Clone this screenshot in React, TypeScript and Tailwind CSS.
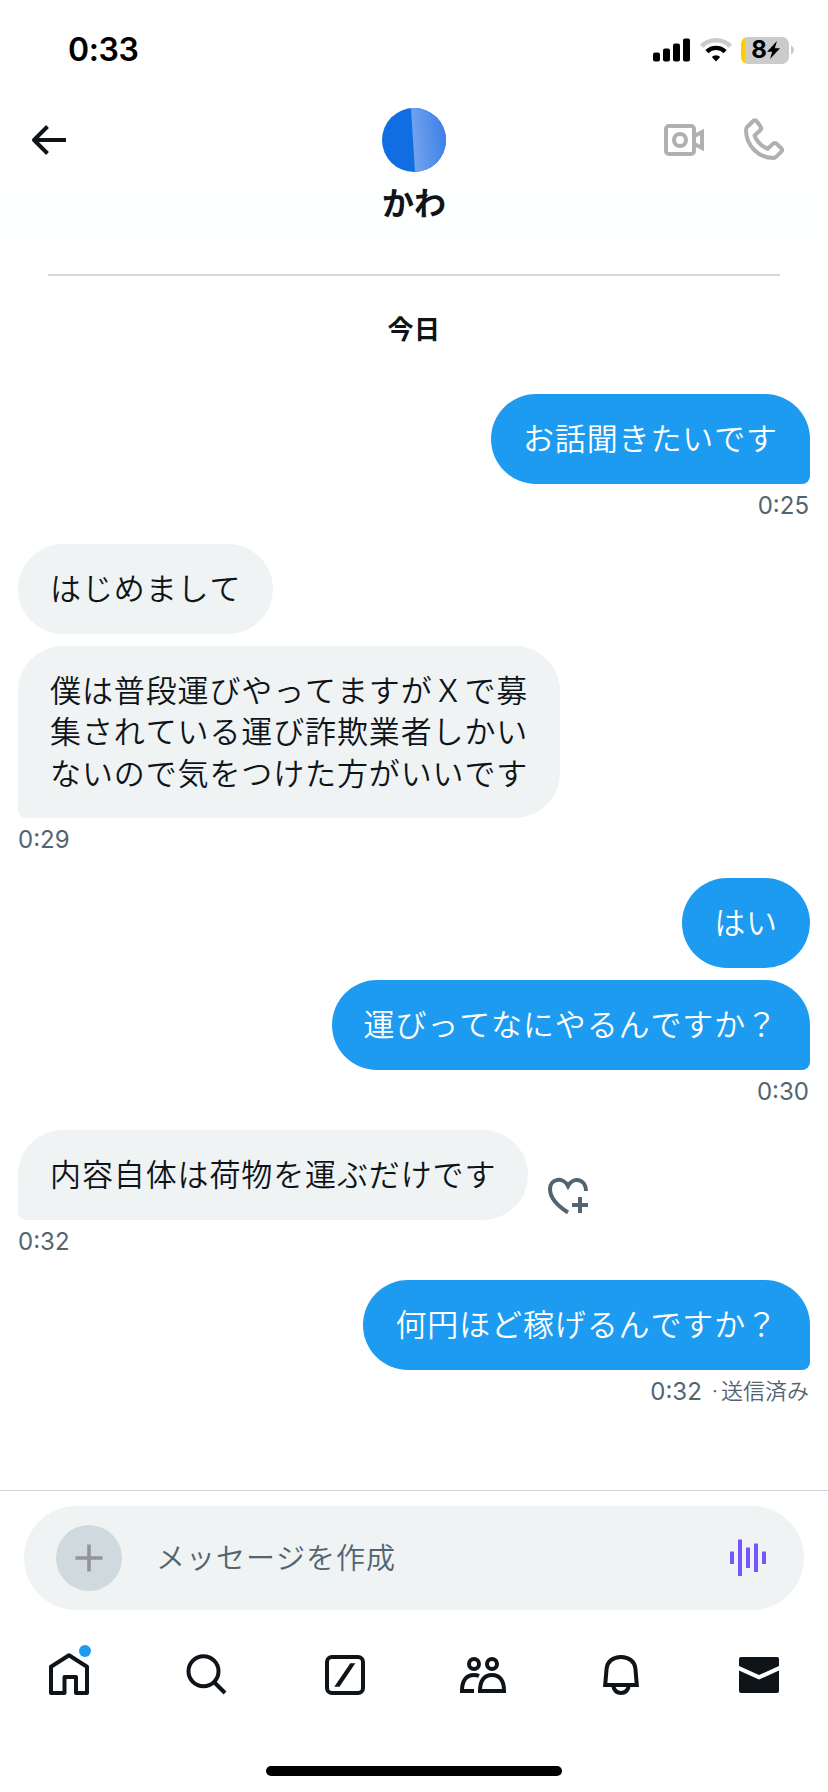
import clsx from 'clsx';

interface Message {
  lines: string[];
  tail?: boolean;
  likeable?: boolean;
}

interface MessageGroup {
  id: number;
  mine: boolean;
  time: string;
  status?: string;
  messages: Message[];
}

const groups: MessageGroup[] = [
  { id: 1, mine: true, time: '0:25', messages: [{ lines: ['お話聞きたいです'], tail: true }] },
  {
    id: 2,
    mine: false,
    time: '0:29',
    messages: [
      { lines: ['はじめまして'] },
      {
        lines: [
          '僕は普段運びやってますがＸで募',
          '集されている運び詐欺業者しかい',
          'ないので気をつけた方がいいです',
        ],
        tail: true,
      },
    ],
  },
  {
    id: 3,
    mine: true,
    time: '0:30',
    messages: [{ lines: ['はい'] }, { lines: ['運びってなにやるんですか？'], tail: true }],
  },
  {
    id: 4,
    mine: false,
    time: '0:32',
    messages: [{ lines: ['内容自体は荷物を運ぶだけです'], tail: true, likeable: true }],
  },
  {
    id: 5,
    mine: true,
    time: '0:32',
    status: '送信済み',
    messages: [{ lines: ['何円ほど稼げるんですか？'], tail: true }],
  },
];

function StatusBar() {
  return (
    <div className="flex h-[100px] items-center justify-between pl-[68px] pr-[33px]">
      <span className="text-[32px] font-semibold leading-none tracking-[-0.4px] text-black">0:33</span>
      <div className="flex items-center">
        <svg width="37" height="24" viewBox="0 0 37 24" className="mr-[10px]">
          <rect x="0" y="14.5" width="7" height="9" rx="2" />
          <rect x="10" y="10.5" width="7" height="13" rx="2" />
          <rect x="20" y="5.5" width="7" height="18" rx="2" />
          <rect x="30" y="0.5" width="7" height="23" rx="2" />
        </svg>
        <svg width="32" height="24" viewBox="0 0 32 24" className="mr-[9px]" fill="none">
          <path d="M1.6 8.2a20.5 20.5 0 0 1 28.8 0" stroke="#cbcbcb" strokeWidth="4.4" />
          <path d="M6.9 13.6a13 13 0 0 1 18.2 0" stroke="#000" strokeWidth="4.4" />
          <path d="M11.8 19a6 6 0 0 1 8.4 0L16 23.5z" fill="#000" />
        </svg>
        <div className="flex h-[27px] w-[48px] items-center justify-center overflow-hidden rounded-[7px] bg-[linear-gradient(to_right,#ffcc00_4px,#cbcbcb_4px)] pl-px">
          <span className="text-[24px] font-bold leading-none tracking-[-1px] text-black">8</span>
          <svg width="13" height="18" viewBox="0 0 13 18" className="ml-px shrink-0">
            <path d="M10 0L0 10.800h5.200L3 18 13 7.200H7.800z" />
          </svg>
        </div>
        <svg width="4" height="10" viewBox="0 0 4 10" className="ml-[2px]">
          <path d="M0 0.5c4 1.8 4 7.2 0 9z" fill="#cbcbcb" />
        </svg>
      </div>
    </div>
  );
}

function Header() {
  return (
    <header className="grid h-[141px] grid-cols-3 items-start bg-gradient-to-b from-white to-[#fdfefe] pt-[8px]">
      <svg width="48" height="64" viewBox="0 0 48 64" className="ml-[24px]" fill="none" stroke="#0f1419" strokeWidth="4">
        <path d="M42 32H10M23.5 18.5L10 32l13.5 13.5" strokeLinejoin="round" />
      </svg>
      <div className="flex flex-col items-center">
        <svg width="64" height="64" viewBox="0 0 64 64">
          <defs>
            <linearGradient id="fold" x1="0" x2="1" y1="0.4" y2="0.2">
              <stop offset="0" stopColor="#74a3ee" />
              <stop offset="1" stopColor="#3a7fe6" />
            </linearGradient>
            <clipPath id="round">
              <circle cx="32" cy="32" r="32" />
            </clipPath>
          </defs>
          <g clipPath="url(#round)">
            <rect width="64" height="64" fill="#116ee2" />
            <path d="M29 0h35v64H33z" fill="url(#fold)" />
          </g>
        </svg>
        <h1 className="mt-[12px] text-[32px] font-bold leading-[40px] text-[#0f1419]">かわ</h1>
      </div>
      <div className="flex justify-end gap-[40px] pr-[44px]">
        <svg width="40" height="64" viewBox="0 0 40 64" fill="none" stroke="#afb0b1" strokeWidth="4">
          <rect x="2" y="18" width="28" height="28" rx="3" />
          <circle cx="16" cy="32" r="6" />
          <path d="M30 28.2L38 24v16l-8-4.2" />
        </svg>
        <svg width="40" height="64" viewBox="0 0 40 64" fill="none" stroke="#afb0b1" strokeWidth="4" strokeLinejoin="round">
          <path d="M9.5 12.7L3.3 18.8Q2 20 2 22C2 38 15 50 29 50q2 0 3.3-1.300l5-5q1.500-1.700 0-3.400l-4.500-4.500q-2-1.500-4 0l-5 5C17 38 13 34 10.500 27.500l6-5.500q1.500-1.800 0-3.500l-4-5.500q-1.500-1.400-3-.3z" />
        </svg>
      </div>
    </header>
  );
}

function Bubble({ message, mine }: { message: Message; mine: boolean }) {
  return (
    <div className={clsx('flex items-end', mine ? 'justify-end' : 'justify-start')}>
      <div
        className={clsx(
          'min-h-[90px] rounded-[45px] px-[32px] py-[24px] text-[31px] font-[350] leading-[41.4px] tracking-[0.88px] [font-kerning:none]',
          mine ? 'bg-[#1d9bf0] text-white' : 'bg-[#eff3f4] text-[#0f1419]',
          message.tail && (mine ? 'rounded-br-[8px]' : 'rounded-bl-[8px]')
        )}
      >
        {message.lines.map((line) => (
          <p key={line} className="whitespace-nowrap">
            {line}
          </p>
        ))}
      </div>
      {message.likeable && (
        <svg width="44" height="44" viewBox="0 0 44 44" className="ml-[20px]" fill="none" stroke="#536471" strokeWidth="4">
          <path d="M20 36.5C9 29.5 2 21 2 13 2 2.500 15 0.500 20 10 25 0.500 38 2.500 38 15" />
          <path d="M24 29h16M32 21v16" />
        </svg>
      )}
    </div>
  );
}

function Composer() {
  return (
    <div className="border-t border-[#c7d3d9] px-[24px] pt-[15px]">
      <div className="flex h-[104px] items-center rounded-full bg-[#eff3f4] pl-[32px] pr-[38px]">
        <div className="flex h-[66px] w-[66px] items-center justify-center rounded-full bg-[#cfd9de]">
          <svg width="28" height="28" viewBox="0 0 28 28" stroke="#969398" strokeWidth="3.6">
            <path d="M14 0.5v27M0.5 14h27" />
          </svg>
        </div>
        <span className="ml-[34px] flex-1 text-[29px] font-[350] leading-none tracking-[1px] text-[#536471] [font-kerning:none]">
          メッセージを作成
        </span>
        <svg width="36" height="38" viewBox="0 0 36 38" fill="#7856ff">
          <rect x="0" y="12.5" width="4" height="12.5" />
          <rect x="8" y="0.5" width="4" height="36.5" />
          <rect x="16" y="8.5" width="4" height="20.5" />
          <rect x="24" y="4.5" width="4" height="28.5" />
          <rect x="32" y="12.5" width="4" height="12.5" />
        </svg>
      </div>
    </div>
  );
}

function TabBar() {
  return (
    <nav className="grid h-[100px] grid-cols-6 justify-items-center pt-[30px]">
      <div className="relative">
        <svg width="48" height="60" viewBox="0 0 48 60" fill="none" stroke="#0f1419" strokeWidth="4" strokeLinejoin="round">
          <path d="M24 15.3L42 26.8V53H31V37H19.500V53H6V26.800z" />
        </svg>
        <span className="absolute right-[2px] top-[5px] h-[12px] w-[12px] rounded-full bg-[#1d9bf0]" />
      </div>
      <svg width="48" height="60" viewBox="0 0 48 60" fill="none" stroke="#0f1419" strokeWidth="4">
        <circle cx="20.5" cy="31.3" r="15" />
        <path d="M31 42l11 11" />
      </svg>
      <svg width="48" height="60" viewBox="0 0 48 60" fill="none" stroke="#0f1419" strokeWidth="4">
        <rect x="6" y="17" width="36" height="36" rx="5" />
        <path d="M13.3 46.7h5.2L34.300 23.300h-5z" fill="#0f1419" stroke="none" />
      </svg>
      <svg width="48" height="60" viewBox="0 0 48 60" fill="none" stroke="#0f1419" strokeWidth="4">
        <circle cx="15" cy="24" r="5" />
        <circle cx="33" cy="24" r="5" />
        <path d="M21 51c0-10 4-16 12-16s12 6 12 16z" />
        <path d="M20 36c-1.5-.7-3-1-5-1-8 0-12 6-12 16h12" />
      </svg>
      <svg width="48" height="60" viewBox="0 0 48 60" fill="none" stroke="#0f1419" strokeWidth="4">
        <path d="M8.2 45l1.4-16.5C10.300 21.500 16 17 24 17s13.700 4.500 14.400 11.500L39.800 45z" />
        <path d="M16.2 46c1 4.500 4 7 7.800 7s6.800-2.500 7.800-7" />
      </svg>
      <svg width="48" height="60" viewBox="0 0 48 60" fill="#0f1419">
        <path d="M4 26V19q0-2 2-2h36q2 0 2 2v7L24 35z" />
        <path d="M4 30.5L24 39.500l20-9V51q0 2-2 2H6q-2 0-2-2z" />
      </svg>
    </nav>
  );
}

export default function App() {
  return (
    <div className="flex h-[1792px] w-[828px] flex-col overflow-hidden bg-white font-[Inter,'Noto_Sans_CJK_JP',sans-serif]">
      <StatusBar />
      <Header />

      <main className="h-[1249px]">
        <hr className="mx-[48px] mt-[33px] border-t-2 border-[#cfd9de]" />
        <p className="mt-[35px] text-center text-[26px] font-bold leading-[38px] tracking-[0.5px] text-[#0f1419]">今日</p>

        <div className="mt-[45px] px-[18px]">
          {groups.map((group) => (
            <section key={group.id}>
              <div className="flex flex-col gap-[12px]">
                {group.messages.map((message) => (
                  <Bubble key={message.lines[0]} message={message} mine={group.mine} />
                ))}
              </div>
              <div
                className={clsx(
                  'flex h-[60px] items-start pr-px pt-[7px] text-[24px] leading-[29px] text-[#536471]',
                  group.mine && 'justify-end'
                )}
              >
                <span>{group.time}</span>
                {group.status && (
                  <span className="ml-[10px] flex gap-[3px] text-[22px] font-[350]">
                    <span>·</span>
                    <span>{group.status}</span>
                  </span>
                )}
              </div>
            </section>
          ))}
        </div>
      </main>

      <Composer />
      <TabBar />

      {/* Home indicator */}
      <div className="mx-auto mt-[56px] h-[10px] w-[296px] shrink-0 rounded-full bg-black" />
    </div>
  );
}
